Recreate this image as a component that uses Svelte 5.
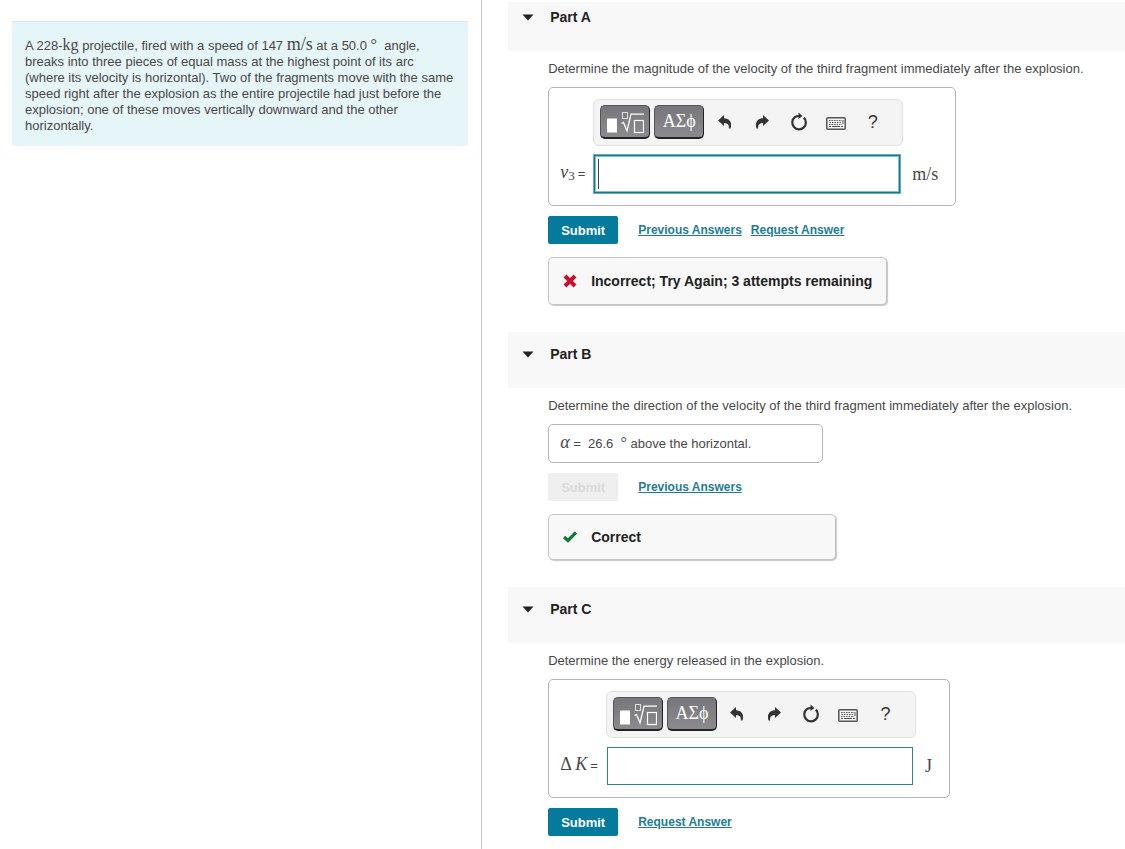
<script lang="ts">
	let velocity = $state('');
	let energy = $state('');
	let openA = $state(true);
	let openB = $state(true);
	let openC = $state(true);
</script>

{#snippet partHeader(title: string, open: boolean, toggle: () => void)}
	<header class="part-header">
		<button class="part-toggle" aria-expanded={open} onclick={toggle}>
			<svg class="caret" class:closed={!open} viewBox="0 0 12 7" aria-hidden="true">
				<path d="M0.5 0.5h11L6 6.5z" />
			</svg>
			<span>{title}</span>
		</button>
	</header>
{/snippet}

{#snippet toolbar()}
	<div class="toolbar" role="toolbar" aria-label="Equation tools">
		<button class="key" aria-label="Templates">
			<svg width="38" height="24" viewBox="0 0 38 24" fill="none" stroke="#fff" aria-hidden="true">
				<rect x="1" y="8.5" width="10" height="14" fill="#fff" stroke="none" />
				<rect x="16.5" y="2.5" width="5" height="6" stroke="#ddd" />
				<path d="M15.5 13.5l2-1 3.5 8.5L25 4.2H38" stroke-width="1.3" />
				<rect x="28.5" y="10.5" width="9" height="12" stroke-width="1.2" />
			</svg>
		</button>
		<button class="key greek">ΑΣϕ</button>
		<button class="tool" aria-label="Undo">
			<svg width="16" height="16" viewBox="0 0 16 16" aria-hidden="true">
				<path d="M1 6.5L7 1V4.3C12 4.3 15.5 8 13.5 14.5H11.8C12.3 11 11 9 7 8.9V12Z" />
			</svg>
		</button>
		<button class="tool" aria-label="Redo">
			<svg width="16" height="16" viewBox="0 0 16 16" aria-hidden="true">
				<path d="M15 6.5L9 1V4.3C4 4.3 0.5 8 2.5 14.5H4.2C3.7 11 5 9 9 8.9V12Z" />
			</svg>
		</button>
		<button class="tool" aria-label="Reset">
			<svg width="18" height="20" viewBox="0 0 18 20" aria-hidden="true">
				<path
					d="M13.8 5.6A6.8 6.8 0 1 1 4.8 5.2Q6.5 4 9.5 4"
					fill="none"
					stroke="#333"
					stroke-width="2.2"
				/>
				<path d="M8.5 0.5L12.5 4L8.5 7Z" />
			</svg>
		</button>
		<button class="tool" aria-label="Keyboard shortcuts">
			<svg width="20" height="16" viewBox="0 0 20 16" fill="none" stroke="#555" aria-hidden="true">
				<rect x="0.8" y="3.8" width="18.4" height="11.4" rx="1" stroke-width="1.5" />
				<path d="M3 6.5h13M3.5 8.5h12M3 10.5h13" stroke-dasharray="1.5 1" />
				<path d="M3 12.5h2M6 12.5h8M15 12.5h2M17 6v4" />
			</svg>
		</button>
		<button class="tool help" aria-label="Help">?</button>
	</div>
{/snippet}

<main class="page">
	<aside class="problem">
		<p class="statement">
			A 228-<span class="unit-kg">kg</span> projectile, fired with a speed of 147
			<span class="math">m/s</span> at a 50.0 <span class="degree">°</span>&nbsp; angle, breaks into
			three pieces of equal mass at the highest point of its arc (where its velocity is horizontal).
			Two of the fragments move with the same speed right after the explosion as the entire
			projectile had just before the explosion; one of these moves vertically downward and the other
			horizontally.
		</p>
	</aside>

	<div class="parts">
		<section class="part">
			{@render partHeader('Part A', openA, () => (openA = !openA))}
			{#if openA}
				<div class="part-body">
					<p class="question">
						Determine the magnitude of the velocity of the third fragment immediately after the
						explosion.
					</p>
					<div class="answer">
						<label class="lhs" for="velocity">
							<span><i class="math">v</i><span class="sub">3</span></span>
							<span>=</span>
						</label>
						<div class="editor">
							{@render toolbar()}
							<div class="field active">
								<input id="velocity" type="text" bind:value={velocity} />
								{#if !velocity}<span class="cursor"></span>{/if}
							</div>
						</div>
						<span class="rhs math">m/s</span>
					</div>
					<div class="actions">
						<button class="submit">Submit</button>
						<a href="#previous-a">Previous Answers</a>
						<a href="#request-a">Request Answer</a>
					</div>
					<div class="feedback incorrect" role="status">
						<svg width="14" height="14" viewBox="0 0 14 14" aria-hidden="true">
							<path
								d="M2 2L12 12M12 2L2 12"
								fill="none"
								stroke="#c8102e"
								stroke-width="4"
							/>
						</svg>
						<span>Incorrect; Try Again; 3 attempts remaining</span>
					</div>
				</div>
			{/if}
		</section>

		<section class="part">
			{@render partHeader('Part B', openB, () => (openB = !openB))}
			{#if openB}
				<div class="part-body">
					<p class="question">
						Determine the direction of the velocity of the third fragment immediately after the
						explosion.
					</p>
					<div class="result">
						<i class="math">α</i> =&nbsp; 26.6&nbsp; <span class="degree">°</span> above the horizontal.
					</div>
					<div class="actions">
						<button class="submit" disabled>Submit</button>
						<a href="#previous-b">Previous Answers</a>
					</div>
					<div class="feedback correct" role="status">
						<svg width="14" height="14" viewBox="0 0 14 14" aria-hidden="true">
							<path d="M1 7L5 10.5L13 2.5" fill="none" stroke="#0f7b3a" stroke-width="3.2" />
						</svg>
						<span>Correct</span>
					</div>
				</div>
			{/if}
		</section>

		<section class="part">
			{@render partHeader('Part C', openC, () => (openC = !openC))}
			{#if openC}
				<div class="part-body">
					<p class="question">Determine the energy released in the explosion.</p>
					<div class="answer">
						<label class="lhs" for="energy">
							<span class="math">Δ&thinsp;<i>K</i></span>
							<span>=</span>
						</label>
						<div class="editor">
							{@render toolbar()}
							<div class="field">
								<input id="energy" type="text" bind:value={energy} />
							</div>
						</div>
						<span class="rhs math">J</span>
					</div>
					<div class="actions">
						<button class="submit">Submit</button>
						<a href="#request-c">Request Answer</a>
					</div>
				</div>
			{/if}
		</section>
	</div>
</main>

<style>
	:global(body) {
		background: #fff;
	}

	.page {
		display: grid;
		grid-template-columns: 3fr 4fr;
		min-height: 100vh;
		font-family: 'Liberation Sans', Arial, sans-serif;
		font-size: 13px;
		line-height: 16px;
		color: #484848;
	}

	button {
		font-family: inherit;
		cursor: pointer;
	}

	.problem {
		padding: 21px 13px 0 12px;
		border-right: 1px solid #c4c8cb;
	}

	.statement {
		margin: 0;
		padding: 13px 12px 12px 13px;
		background: #e6f5f7;
		border-top: 1px solid #d5eaec;
	}

	.math,
	.unit-kg,
	.degree,
	.sub {
		font-family: 'Liberation Serif', 'Times New Roman', serif;
		line-height: 1;
	}

	.math {
		font-size: 18px;
	}

	.unit-kg,
	.degree {
		font-size: 16px;
	}

	.sub {
		font-size: 13px;
		vertical-align: -2px;
	}

	.parts {
		min-width: 0;
		padding: 2px 0 12px 26px;
	}

	.part-header {
		display: flex;
		height: 56px;
		box-sizing: border-box;
		padding: 14px 14px 0;
		background: #f8f8f8;
	}

	.part:first-child .part-header {
		height: 49px;
		padding-top: 7px;
	}

	.part-toggle {
		display: flex;
		align-items: center;
		align-self: flex-start;
		gap: 16px;
		padding: 0;
		border: 0;
		background: none;
		color: #222;
		font-size: 14px;
		font-weight: bold;
		line-height: 16px;
	}

	.caret {
		width: 12px;
		height: 7px;
		fill: #222;
	}

	.caret.closed {
		transform: rotate(-90deg);
	}

	.part-body {
		display: flex;
		flex-direction: column;
		align-items: flex-start;
		padding: 10px 16px 27px 40px;
	}

	.question {
		margin: 0 0 10px;
	}

	.answer {
		display: flex;
		align-items: flex-end;
		padding: 11px 17px 12px 11px;
		border: 1px solid #b5b5b5;
		border-radius: 5px;
	}

	.lhs,
	.rhs {
		display: flex;
		align-items: baseline;
		gap: 3px;
		padding-bottom: 9px;
		line-height: 20px;
	}

	.lhs {
		margin-right: 8px;
	}

	.rhs {
		margin-left: 9px;
	}

	.editor {
		display: flex;
		flex-direction: column;
		gap: 9px;
	}

	.toolbar {
		display: flex;
		align-items: center;
		gap: 4px;
		padding: 5px 13px 6px 6px;
		border: 1px solid #e0e0e0;
		border-radius: 6px;
		background: #f4f4f4;
	}

	.key {
		display: flex;
		align-items: center;
		justify-content: center;
		width: 50px;
		height: 34px;
		padding: 0;
		border: 1px solid #555;
		border-right-color: #222;
		border-bottom: 2px solid #222;
		border-radius: 5px;
		background: linear-gradient(#77777b, #8b8b8f);
		color: #fff;
	}

	.greek {
		font-family: 'Liberation Serif', 'Times New Roman', serif;
		font-size: 18px;
	}

	.tool {
		display: flex;
		align-items: center;
		justify-content: center;
		width: 33px;
		height: 34px;
		padding: 0;
		border: 0;
		background: none;
		color: #333;
		fill: #333;
	}

	.help {
		font-size: 18px;
	}

	.field {
		position: relative;
		display: flex;
		width: 306px;
		margin-left: 1px;
	}

	.field input {
		width: 100%;
		height: 38px;
		box-sizing: border-box;
		padding: 0 6px;
		border: 1px solid #2a8496;
		outline: none;
		background: #fff;
		font: inherit;
		font-size: 16px;
	}

	.field.active input,
	.field input:focus {
		border-color: #1b7488;
		box-shadow:
			0 0 0 1px #5fb0c0,
			inset 0 0 0 1px #7dc3cf;
	}

	.cursor {
		position: absolute;
		top: 4px;
		bottom: 4px;
		left: 4px;
		width: 1px;
		background: #444;
	}

	.result {
		box-sizing: border-box;
		width: 275px;
		padding: 8px 11px 10px;
		border: 1px solid #b5b5b5;
		border-radius: 5px;
	}

	.actions {
		display: flex;
		align-items: center;
		gap: 9px;
		margin-top: 10px;
	}

	.submit {
		height: 28px;
		margin-right: 11px;
		padding: 0 13px;
		border: 0;
		border-radius: 2px;
		background: #047a9c;
		color: #fff;
		font-size: 13px;
		font-weight: bold;
	}

	.submit:disabled {
		background: #efefef;
		color: #dadada;
		cursor: default;
	}

	a {
		color: #1d7d97;
		font-size: 12px;
		font-weight: bold;
	}

	.feedback {
		display: flex;
		align-items: center;
		gap: 14px;
		box-sizing: border-box;
		margin-top: 13px;
		padding: 15px 14px;
		border: 1px solid #c4c4c4;
		border-radius: 5px;
		background: #f8f8f8;
		box-shadow: 1px 1px 1px #c8c8c8;
		color: #222;
		font-size: 14px;
		font-weight: bold;
	}

	.correct {
		width: 288px;
		padding-block: 14px;
	}
</style>
